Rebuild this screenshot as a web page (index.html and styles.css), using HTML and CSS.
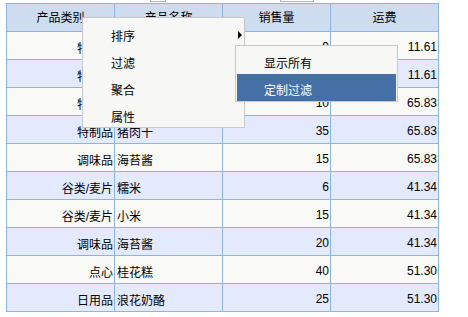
FILE: index.html
```html
<!DOCTYPE html>
<html lang="zh-CN">
<head>
    <meta charset="UTF-8">
    <title>产品表格</title>
    <link rel="stylesheet" href="styles.css">
</head>
<body>
    <div class="page">
        <!-- tabs cut off above the grid -->
        <div class="tabs">
            <span class="tab tab-a"></span>
            <span class="tab tab-b"></span>
        </div>

        <table class="grid">
            <thead>
                <tr>
                    <th>产品类别</th>
                    <th>产品名称</th>
                    <th>销售量</th>
                    <th>运费</th>
                </tr>
            </thead>
            <tbody>
                <tr><td class="num">特制品</td><td>猪肉干</td><td class="num">9</td><td class="num">11.61</td></tr>
                <tr><td class="num">特制品</td><td>猪肉干</td><td class="num">12</td><td class="num">11.61</td></tr>
                <tr><td class="num">特制品</td><td>猪肉干</td><td class="num">10</td><td class="num">65.83</td></tr>
                <tr><td class="num">特制品</td><td>猪肉干</td><td class="num">35</td><td class="num">65.83</td></tr>
                <tr><td class="num">调味品</td><td>海苔酱</td><td class="num">15</td><td class="num">65.83</td></tr>
                <tr><td class="num">谷类/麦片</td><td>糯米</td><td class="num">6</td><td class="num">41.34</td></tr>
                <tr><td class="num">谷类/麦片</td><td>小米</td><td class="num">15</td><td class="num">41.34</td></tr>
                <tr><td class="num">调味品</td><td>海苔酱</td><td class="num">20</td><td class="num">41.34</td></tr>
                <tr><td class="num">点心</td><td>桂花糕</td><td class="num">40</td><td class="num">51.30</td></tr>
                <tr><td class="num">日用品</td><td>浪花奶酪</td><td class="num">25</td><td class="num">51.30</td></tr>
            </tbody>
        </table>

        <!-- Context menu -->
        <ul class="menu">
            <li class="has-sub">排序<span class="arrow"></span></li>
            <li>过滤</li>
            <li>聚合</li>
            <li>属性</li>
        </ul>

        <ul class="menu submenu">
            <li>显示所有</li>
            <li class="active">定制过滤</li>
        </ul>
    </div>
</body>
</html>
```

FILE: styles.css
```css
* {
    margin: 0;
    padding: 0;
    box-sizing: border-box;
}

body {
    background-color: #fff;
    color: #000;
    font-family: "Liberation Sans", "Noto Sans CJK SC", sans-serif;
    font-size: 12px;
}

.page {
    position: relative;
    width: 468px;
    height: 317px;
}

.tabs {
    height: 3px;
    position: relative;
}

.tab {
    position: absolute;
    top: -2px;
    height: 4px;
    border: 1px solid #b4b4b4;
    background-color: #fff;
}

.tab-a {
    left: 150px;
    width: 16px;
}

.tab-b {
    left: 280px;
    width: 34px;
}

/* Grid */
.grid {
    margin-left: 6px;
    border-collapse: collapse;
    table-layout: fixed;
    width: 433px;
}

.grid th,
.grid td {
    border: 1px solid #8db4e2;
    height: 28px;
    width: 108px;
    padding: 3px 2px 0;
    white-space: nowrap;
    overflow: hidden;
    font-weight: normal;
}

.grid th {
    background-color: #cedcf0;
    text-align: center;
    padding-top: 0;
    padding-bottom: 2px;
}

.grid td {
    text-align: left;
}

.grid td.num {
    text-align: right;
    padding-right: 1px;
}

.grid tbody tr:nth-child(odd) td {
    background-color: #f9f9f6;
}

.grid tbody tr:nth-child(even) td {
    background-color: #e4eafd;
}

/* Context menu */
.menu {
    position: absolute;
    left: 82px;
    top: 17px;
    width: 163px;
    height: 111px;
    list-style: none;
    background-color: #f7f7f5;
    border: 1px solid #c8c8c8;
    padding-top: 2px;
    overflow: hidden;
}

.menu li {
    position: relative;
    height: 27px;
    padding: 9px 0 0 28px;
    line-height: 17px;
}

.arrow {
    position: absolute;
    right: 2px;
    top: 11px;
    width: 0;
    height: 0;
    border-top: 4px solid transparent;
    border-bottom: 4px solid transparent;
    border-left: 4px solid #000;
}

.submenu {
    left: 235px;
    top: 45px;
    height: 57px;
    padding: 1px 1px 0;
}

.submenu li {
    padding-left: 27px;
}

.submenu li.active {
    background-color: #4570a6;
    color: #fff;
}
```
